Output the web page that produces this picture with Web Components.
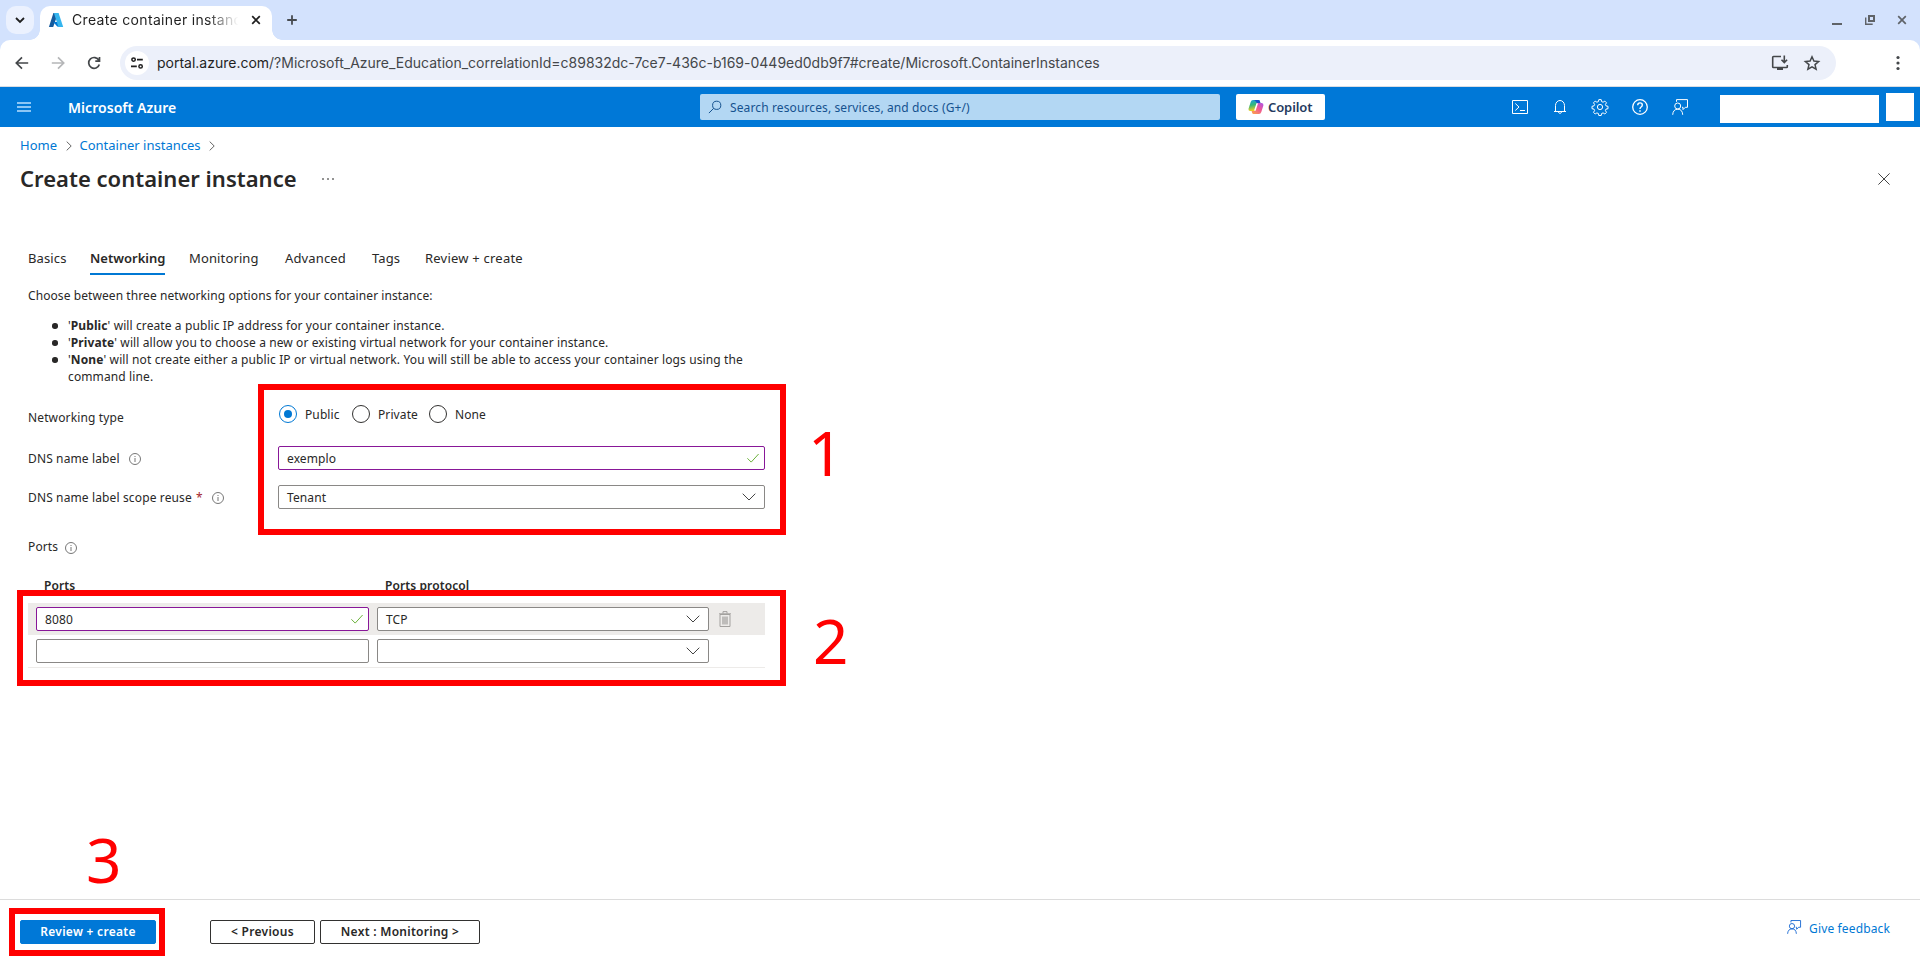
<!DOCTYPE html>
<html lang="en"><head><meta charset="utf-8"><title>Create container instance</title>
<style>
html,body{margin:0;height:100%;background:#fff;overflow:hidden}
body{font:12px/17px "Noto Sans",sans-serif;color:#292827;letter-spacing:.1px}
</style></head><body>
<az-window></az-window>
<script>
const def=(name,css,html)=>customElements.define(name,class extends HTMLElement{
  connectedCallback(){
    if(this.shadowRoot)return;
    const t=document.createElement('template');
    t.innerHTML=`<style>*{box-sizing:border-box}${css}</style>${typeof html==='function'?html(this):html}`;
    this.attachShadow({mode:'open'}).append(t.content.cloneNode(true));
  }
});
const ICONS={
 down:[10,'<path d="M1 3l4 4 4-4" stroke-width="1.8"/>'],
 azure:[16,'<path d="M5.4 1h4.7L5.2 15H.9z" fill="#155a9c" stroke="none"/><path d="M12 10H5.2l4 4.6 3.2.4z" fill="#0078d4" stroke="none"/><path d="M5.9 1h4.7L15.2 15h-4.8z" fill="#35b5ee" stroke="none"/>'],
 x:[10,'<path d="M1.2 1.2l7.6 7.6M8.8 1.2L1.2 8.8" stroke-width="1.7"/>'],
 plus:[12,'<path d="M6 1.2v9.6M1.2 6h9.6" stroke-width="1.8"/>'],
 back:[14,'<path d="M13.2 7H1.5M7 1.3L1.3 7 7 12.7" stroke-width="1.7"/>'],
 fwd:[14,'<path d="M.8 7h11.7M7 1.3L12.7 7 7 12.7" stroke-width="1.7"/>'],
 reload:[14,'<path d="M11.9 4.4A5.4 5.4 0 1 0 12.3 8.4M12.5 1v4.2H8.3" stroke-width="1.7"/>'],
 tune:[14,'<circle cx="3.6" cy="3.6" r="1.7" stroke-width="1.5"/><path d="M7 3.6h5.8M1 10.4h5.8" stroke-width="1.6"/><circle cx="10.6" cy="10.4" r="1.7" stroke-width="1.5"/>'],
 install:[18,'<path d="M10 2.5H2.5q-.8 0-.8.8v9.4q0 .8.8.8h13q.8 0 .8-.8V11M13.3 1.5v6.8M10.5 5.8l2.8 2.8 2.8-2.8" stroke-width="1.6"/><path d="M6 13.5h6v2.5H6z" fill="currentColor" stroke="none"/>'],
 star:[18,'<path d="M9 2.8l1.9 4.3 4.7.4-3.6 3.1 1.1 4.6L9 12.8l-4.1 2.4 1.1-4.6-3.6-3.1 4.7-.4z" stroke-width="1.5"/>'],
 dots:[16,'<g fill="currentColor" stroke="none"><circle cx="8" cy="2.5" r="1.6"/><circle cx="8" cy="8" r="1.6"/><circle cx="8" cy="13.5" r="1.6"/></g>'],
 min:[10,'<path d="M0 9h10" stroke-width="2"/>'],
 restore:[10,'<path d="M4 1h5v5H4z" stroke-width="2"/><path d="M.7 2.5v6.8h7" stroke-width="1.4"/>'],
 menu:[14,'<path d="M0 3h14M0 7h14M0 11h14" stroke-width="2"/>'],
 search:[14,'<circle cx="8.7" cy="5.3" r="4.1"/><path d="M5.7 8.3L.9 13.1"/>'],
 shell:[16,'<path d="M.5 1.5h15v13H.5zM3.3 4.5L7 8l-3.7 3.5M8 11.5h5"/>'],
 bell:[16,'<path d="M3.5 12.5V6.5a4.5 5 0 0 1 9 0v6M2 12.5h12M6.2 13.2q1.8 2.6 3.6 0"/>'],
 gear:[16,'<path d="M6.8 .6h2.4l.4 2 1.5.6 1.7-1.1 1.7 1.7-1.1 1.7.6 1.4 2 .4v2.4l-2 .4-.6 1.5 1.1 1.7-1.7 1.7-1.7-1.1-1.5.6-.4 2H6.8l-.4-2-1.5-.6-1.7 1.1-1.7-1.7 1.1-1.7-.6-1.5-2-.4V7.3l2-.4.6-1.4-1.1-1.7 1.7-1.7 1.7 1.1 1.5-.6z"/><circle cx="8" cy="8" r="2.6"/>'],
 help:[16,'<circle cx="8" cy="8" r="7.3" stroke-width="1.3"/><path d="M5.7 6.3q0-2.4 2.3-2.4t2.3 2.1q0 1.2-1.2 2T8 10" stroke-width="1.4"/><path d="M8 11.2v1.5" stroke-width="1.5"/>'],
 feedback:[16,'<path d="M4.5 2.8V.6h11v7.7h-2.2L11 10.6V8.3h-1"/><circle cx="5.7" cy="7" r="3"/><path d="M.7 15.8q.3-5.5 5-5.6t5 5.6"/>'],
 close:[12,'<path d="M.4 .4l11.2 11.2M11.6 .4L.4 11.6"/>'],
 crumb:[10,'<path d="M2.7 .6L7.2 5 2.7 9.4"/>'],
 more:[12,'<path d="M0 6h2M5 6h2M10 6h2"/>'],
 info:[12,'<circle cx="6" cy="6" r="5.5"/><path d="M6 5v4M6 3v1"/>'],
 check:[12,'<path d="M.4 6.3l3.8 3.8L11.6 2"/>'],
 chev:[14,'<path d="M.7 3.7L7 10l6.3-6.3"/>'],
 trash:[16,'<path d="M3 3.5h10v12H3zM2 2.8h12M6 2.5V.6h4v1.9"/><path d="M5 5.5h6v8H5z" fill="#bebcba" stroke="none"/>'],
 copilot:[16,'<defs><linearGradient id="a" x1="0" y1="0" x2=".2" y2="1"><stop offset="0" stop-color="#1ba0e0"/><stop offset=".5" stop-color="#35b778"/><stop offset="1" stop-color="#f3cf20"/></linearGradient><linearGradient id="b" x1="1" y1="0" x2=".2" y2="1"><stop offset="0" stop-color="#a954ec"/><stop offset=".5" stop-color="#ef5794"/><stop offset="1" stop-color="#fb9c52"/></linearGradient></defs><g stroke="none"><path d="M5 1h5.5q1 0 1.3 1l.6 2H9L6.5 12H2.3Q.2 12 .6 9.5L2.7 3Q3.3 1 5 1z" fill="url(#a)"/><path d="M6 1h4.5q1 0 1.3 1l.6 2H9.3Q8.2 4 7.5 2z" fill="#1750cf"/><path d="M11 15H5.5q-1 0-1.3-1l-.6-2H7L9.5 4h4.2q2.1 0 1.7 2.5L13.3 13Q12.7 15 11 15z" fill="url(#b)"/></g><path d="M9.2 4.4L6.9 11.6" stroke="#fff" stroke-width="1.5"/>']
};
def('az-icon',':host{display:inline-flex;flex:none}svg{display:block;overflow:visible}',e=>{
  const [v,p]=ICONS[e.getAttribute('name')],s=e.getAttribute('size')||v;
  return `<svg width="${s}" height="${s}" viewBox="0 0 ${v} ${v}" fill="none" stroke="currentColor">${p}</svg>`});

def('browser-tabs',`:host{display:flex;height:40px;background:#d3e2fd;padding:6px 0 0 6px;font:14px/20px Inter,sans-serif;color:#1f1f1f}
.dd{width:28px;height:28px;border-radius:10px;background:#ebf1fe;display:grid;place-items:center;margin-right:6px}
.tab{position:relative;width:232px;height:34px;background:#fff;border-radius:10px 10px 0 0;display:flex;align-items:center;padding:0 11px 6px 8px}
.tab:before,.tab:after{content:"";position:absolute;bottom:0;width:10px;height:10px;background:radial-gradient(circle at 0 0,transparent 9.5px,#fff 10px);left:-10px}
.tab:after{left:auto;right:-10px;background:radial-gradient(circle at 100% 0,transparent 9.5px,#fff 10px)}
.t{width:168px;margin-left:8px;overflow:hidden;white-space:nowrap;letter-spacing:.33px;-webkit-mask-image:linear-gradient(90deg,#000 80%,transparent 99%);mask-image:linear-gradient(90deg,#000 80%,transparent 99%)}
.tab az-icon:last-child{margin-left:auto}
.plus{margin:8px 0 0 14px;color:#474b50}.win{margin:9px 13px 0 auto;display:flex;gap:22.5px;color:#5f6368}`,
`<div class="dd"><az-icon name="down"></az-icon></div><div class="tab"><az-icon name="azure"></az-icon><span class="t">Create container instance</span><az-icon name="x"></az-icon></div><az-icon class="plus" name="plus"></az-icon><div class="win"><az-icon name="min"></az-icon><az-icon name="restore"></az-icon><az-icon name="x"></az-icon></div>`);

def('browser-bar',`:host{display:block;background:#d3e2fd;height:47px}.bar{height:47px;background:#fff;border-radius:10px 10px 0 0;border-bottom:1px solid #d9dde3;display:flex;align-items:center;padding:0 14px 0 15px;color:#44474a;font:14px/20px Inter,sans-serif}
.f{color:#b5b6b8;margin:0 22px}
.omni{margin-left:19px;width:1716px;height:34px;border-radius:17px;background:#ecf0fa;display:flex;align-items:center;padding:0 15px 0 5px}
.c{width:24px;height:24px;border-radius:50%;background:#fff;display:grid;place-items:center;margin-right:8px;color:#1f1f1f}
.url{white-space:nowrap;letter-spacing:-.005px}.url b{font-weight:400;color:#1f1f1f}.sp{margin-left:auto;margin-right:14px}.d{margin-left:auto}`,
`<div class="bar"><az-icon name="back"></az-icon><az-icon class="f" name="fwd"></az-icon><az-icon name="reload"></az-icon><div class="omni"><span class="c"><az-icon name="tune"></az-icon></span><span class="url"><b>portal.azure.com</b>/?Microsoft_Azure_Education_correlationId=c89832dc-7ce7-436c-b169-0449ed0db9f7#create/Microsoft.ContainerInstances</span><az-icon class="sp" name="install"></az-icon><az-icon name="star"></az-icon></div><az-icon class="d" name="dots"></az-icon></div>`);

def('azure-header',`:host{display:flex;height:40px;background:#0078d7;color:#fff;align-items:center;padding-left:17px}
.m{color:#8cc6f5}.brand{margin-left:37px;width:632px;font-size:14px;font-weight:600;white-space:nowrap;letter-spacing:.05px}
.s{width:520px;height:26px;background:#b3d7f3;border-radius:2px;display:flex;align-items:center;padding-left:8px;gap:8px;color:#15528f;letter-spacing:.12px}
.cp{margin-left:16px;width:89px;height:26px;background:#fff;border-radius:2px;display:flex;align-items:center;padding-left:12px;gap:4px;color:#243a5e;font-weight:600;font-size:13px;letter-spacing:-.1px}
.ic{display:flex;gap:24px;margin-left:187px}
.r1{width:159px;height:28px;background:#fff;margin:4px 0 0 32px}.r2{width:28px;height:28px;background:#fff;margin-left:7px}`,
`<az-icon class="m" name="menu"></az-icon><span class="brand">Microsoft Azure</span><div class="s"><az-icon name="search"></az-icon><span>Search resources, services, and docs (G+/)</span></div><div class="cp"><az-icon name="copilot"></az-icon><span>Copilot</span></div><div class="ic"><az-icon name="shell"></az-icon><az-icon name="bell"></az-icon><az-icon name="gear"></az-icon><az-icon name="help"></az-icon><az-icon name="feedback"></az-icon></div><div class="r1"></div><div class="r2"></div>`);

def('blade-title',`:host{display:block;padding:10px 30px 0 20px}
.c{display:flex;align-items:center;height:17px;color:#0078d4;white-space:nowrap;font-size:13px;letter-spacing:0}.c az-icon{color:#666;margin:0 6px}.c span+az-icon{margin-left:6.5px}
.t{display:flex;align-items:center;height:32px;margin:9px 0 0}h1{font-size:22px;line-height:30px;padding-bottom:2px;font-weight:600;margin:0;width:302px;white-space:nowrap;letter-spacing:.02px}.x{margin-left:auto;color:#444}`,
`<div class="c"><span>Home</span><az-icon name="crumb"></az-icon><span>Container instances</span><az-icon name="crumb"></az-icon></div><div class="t"><h1>Create container instance</h1><az-icon name="more"></az-icon><az-icon class="x" name="close"></az-icon></div>`);

def('az-tab',':host{display:block;height:27px;font-size:13px;line-height:20px;white-space:nowrap;letter-spacing:.13px}:host([on]){font-weight:600;border-bottom:2px solid #0078d4;letter-spacing:0}','<slot></slot>');
def('az-field',`:host{display:flex;align-items:center;height:24px;border:1px solid #8a8886;border-radius:2px;background:#fff;padding:0 8px}:host([valid]){border-color:#881798}az-icon{margin-left:auto;color:#444}:host([valid]) az-icon{color:#6bb23a}`,
e=>`<span><slot></slot></span>${e.hasAttribute('valid')?'<az-icon name="check"></az-icon>':e.hasAttribute('select')?'<az-icon name="chev"></az-icon>':''}`);
def('az-radio',`:host{display:flex;align-items:center;height:20px}i{width:18px;height:18px;border:1px solid #323130;border-radius:50%;margin-right:8px;display:grid;place-items:center}:host([on]) i{border-color:#0078d4}:host([on]) i:after{content:"";width:8px;height:8px;border-radius:50%;background:#0078d4}`,'<i></i><slot></slot>');
def('az-label',`:host{display:flex;align-items:center;height:17px;white-space:nowrap;letter-spacing:.13px}az-icon{color:#777;margin:2px 0 0 var(--gap,9.5px)}em{color:#a4262c;font-style:normal;margin-left:4px}`,
e=>`<slot></slot>${e.hasAttribute('required')?'<em>*</em>':''}${e.hasAttribute('info')?'<az-icon name="info"></az-icon>':''}`);
def('az-button',`:host{display:grid;place-items:center;height:24px;padding-bottom:1px;border:1px solid #323130;border-radius:2px;font-weight:600;white-space:nowrap;letter-spacing:.28px}:host([primary]){background:#0078d7;border-color:#0078d7;color:#fff}`,'<slot></slot>');
def('mark-box',':host{position:absolute;border:6px solid red;pointer-events:none}','');
def('mark-number',':host{position:absolute;color:red;font-size:62px;line-height:62px}','<slot></slot>');

def('networking-form',`:host{display:block;padding:53px 0 0 28px;width:766px}
.tabs{display:grid;height:27px;grid-template-columns:62px 99px 96px 87px 53px auto;justify-content:start}.tabs az-tab{justify-self:start}.tabs az-tab:last-child{letter-spacing:.22px}
p{margin:12px 0 13px;letter-spacing:.08px}ul{margin:0;padding:0 0 0 40px;list-style:none}li{position:relative;height:17px;white-space:nowrap}li:before{content:"";position:absolute;left:-16px;top:6px;width:5.5px;height:5.5px;border-radius:50%;background:#292827}li.w{height:34px;letter-spacing:.12px}b{font-weight:700}
.g{display:grid;grid-template-columns:250px 487px}
.radios{display:flex}
.th{display:flex;font-weight:600;line-height:17px;padding-left:16px}.th span{width:341px}
.row{display:flex;gap:8px;padding:4px 8px;height:32px;width:737px}.row az-field:first-child{width:333px}.row az-field:nth-child(2){width:332px}.row>az-icon{color:#a3a19f;margin:4px 0 0 0}
.on{background:#edebe9}.last{height:33px;border-bottom:1px solid #edebe9}`,
`<div class="tabs"><az-tab>Basics</az-tab><az-tab on>Networking</az-tab><az-tab>Monitoring</az-tab><az-tab>Advanced</az-tab><az-tab>Tags</az-tab><az-tab>Review + create</az-tab></div>
<p>Choose between three networking options for your container instance:</p>
<ul><li>'<b>Public</b>' will create a public IP address for your container instance.</li><li>'<b>Private</b>' will allow you to choose a new or existing virtual network for your container instance.</li><li class="w">'<b>None</b>' will not create either a public IP or virtual network. You will still be able to access your container logs using the<br>command line.</li></ul>
<div class="g" style="margin-top:19px"><az-label style="margin-top:5px">Networking type</az-label><div class="radios"><az-radio on style="margin-left:1px;width:73px">Public</az-radio><az-radio style="width:77px">Private</az-radio><az-radio>None</az-radio></div></div>
<div class="g" style="margin-top:20px;align-items:center"><az-label info>DNS name label</az-label><az-field valid style="padding-right:5px">exemplo</az-field></div>
<div class="g" style="margin-top:15px;align-items:center"><az-label info required>DNS name label scope reuse</az-label><az-field select>Tenant</az-field></div>
<az-label info style="margin-top:29px;--gap:7px">Ports</az-label>
<div class="th" style="margin-top:22px"><span>Ports</span><span>Ports protocol</span></div>
<div class="row on" style="margin-top:9px"><az-field valid style="padding-right:5px">8080</az-field><az-field select>TCP</az-field><az-icon name="trash"></az-icon></div>
<div class="row last"><az-field></az-field><az-field select></az-field></div>`);

def('wizard-footer',`:host{display:flex;height:70px;border-top:1px solid #dcdcdc;padding:20px 30px 0 20px;margin-top:auto}.fb{margin-left:auto;display:flex;color:#0078d4;height:17px;gap:8px;letter-spacing:.14px}.fb az-icon{color:#0f62d0}`,
`<az-button primary style="width:136px">Review + create</az-button><az-button style="width:105px;margin-left:54px">&lt; Previous</az-button><az-button style="width:160px;margin-left:5px">Next : Monitoring &gt;</az-button><div class="fb"><az-icon name="feedback" size="14"></az-icon><span>Give feedback</span></div>`);

def('az-window',':host{display:flex;flex-direction:column;position:relative;width:1920px;height:969px;background:#fff}',
`<browser-tabs></browser-tabs><browser-bar></browser-bar><azure-header></azure-header><blade-title></blade-title><networking-form></networking-form><wizard-footer></wizard-footer>
<mark-box style="left:258px;top:384px;width:528px;height:151px"></mark-box><mark-box style="left:17px;top:590px;width:769px;height:96px"></mark-box><mark-box style="left:9px;top:908px;width:156px;height:48px"></mark-box>
<mark-number style="left:808px;top:421px">1</mark-number><mark-number style="left:813px;top:609px">2</mark-number><mark-number style="left:86px;top:828px">3</mark-number>`);
</script></body></html>
